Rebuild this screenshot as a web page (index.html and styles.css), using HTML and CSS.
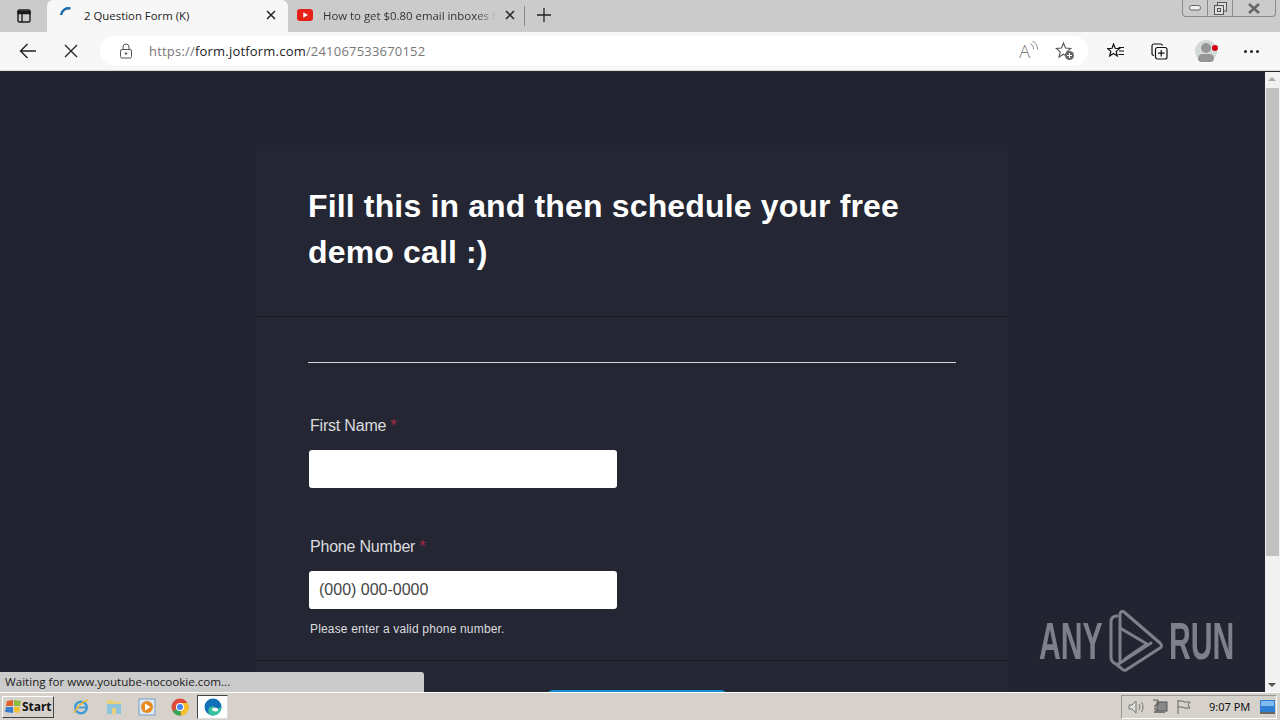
FILE: index.html
```html
<!DOCTYPE html>
<html lang="en">
<head>
    <meta charset="UTF-8">
    <meta name="viewport" content="width=device-width, initial-scale=1.0">
    <title>2 Question Form (K)</title>
    <link rel="stylesheet" href="styles.css">
</head>
<body>
    <!-- Browser tabs -->
    <div class="tabstrip">
        <div class="tab-menu">
            <svg width="16" height="16" viewBox="0 0 16 16" fill="none" stroke="#1a1a1a" stroke-width="1.4"><rect x="2" y="2" width="12" height="12" rx="1.5"/><path d="M2 3.5h12v2H2z" fill="#1a1a1a"/><path d="M6 5v9"/></svg>
        </div>
        <div class="tab tab-active">
            <svg class="tab-spin" width="14" height="14" viewBox="0 0 14 14" fill="none" stroke="#1b6aa8" stroke-width="2.4"><path d="M2 10C3 5 7 2.500 11.500 3.500"/></svg>
            <span class="tab-title">2 Question Form (K)</span>
            <svg class="tab-close" width="10" height="10" viewBox="0 0 10 10" stroke="#222" stroke-width="1.500"><path d="M1 1l8 8M9 1l-8 8"/></svg>
        </div>
        <div class="tab tab-second">
            <svg width="16" height="12" viewBox="0 0 16 12"><rect width="16" height="12" rx="3" fill="#e62117"/><path d="M6.300 3.300v5.400L11 6z" fill="#fff"/></svg>
            <span class="tab-title tab-title-fade">How to get $0.80 email inboxes f</span>
            <svg class="tab-close" width="10" height="10" viewBox="0 0 10 10" stroke="#222" stroke-width="1.500"><path d="M1 1l8 8M9 1l-8 8"/></svg>
        </div>
        <div class="tab-sep"></div>
        <svg class="tab-new" width="14" height="14" viewBox="0 0 14 14" stroke="#222" stroke-width="1.300"><path d="M7 0v14M0 7h14"/></svg>
        <div class="window-btns">
            <div class="win-btn win-min"><svg width="12" height="6" viewBox="0 0 12 6" fill="#eee" stroke="#666"><rect x="0.500" y="0.500" width="11" height="4.500" rx="2"/></svg></div>
            <div class="win-btn win-max"><svg width="13" height="13" viewBox="0 0 13 13" fill="none" stroke="#555"><rect x="3.500" y="0.500" width="9" height="8.500" fill="#ddd"/><rect x="0.500" y="3.500" width="9" height="9" fill="#ddd"/><rect x="3.500" y="6.500" width="3" height="3"/></svg></div>
            <div class="win-btn win-close"><svg width="14" height="11" viewBox="0 0 14 11" fill="none" stroke="#666" stroke-width="2.500"><path d="M2 1l10 9M12 1L2 10"/></svg></div>
        </div>
    </div>

    <!-- Address bar -->
    <div class="toolbar">
        <svg class="tool-back" width="18" height="16" viewBox="0 0 18 16" fill="none" stroke="#222" stroke-width="1.400"><path d="M17 8H1.500M8.500 1L1.500 8l7 7"/></svg>
        <svg class="tool-stop" width="14" height="14" viewBox="0 0 14 14" stroke="#222" stroke-width="1.300"><path d="M1 1l12 12M13 1L1 13"/></svg>
        <div class="address">
            <svg class="lock" width="14" height="16" viewBox="0 0 14 16" fill="none" stroke="#555"><rect x="1.500" y="6.500" width="11" height="8.500" rx="1.500"/><path d="M4 6.500V4a3 3 0 0 1 6 0v2.500"/><circle cx="7" cy="10.500" r="0.800" fill="#555"/></svg>
            <span class="url"><span class="url-dim">https://</span>form.jotform.com<span class="url-dim">/241067533670152</span></span>
            <span class="read-aloud">A<svg width="8" height="12" viewBox="0 0 8 12" fill="none" stroke="#888"><path d="M0.500 3c2 .5 3 2.500 3 5M2.500 0.500c3 .5 5 4 5 8"/></svg></span>
            <svg class="fav-add" width="20" height="20" viewBox="0 0 20 20"><path d="M8.500 2l2 5 5.300.4-4 3.500 1.200 5.100-4.500-2.800L4 16l1.300-5.100-4-3.500L6.500 7z" fill="none" stroke="#555" stroke-width="1.100"/><circle cx="14.500" cy="14.500" r="4.500" fill="#666"/><path d="M14.500 12v5M12 14.500h5" stroke="#fff"/></svg>
        </div>
        <div class="tool-right">
            <svg width="18" height="16" viewBox="0 0 18 16" fill="none" stroke="#111" stroke-width="1.200"><path d="M6.500 1l1.700 4.300 4.300.3-3.300 2.800 1.100 4.600-3.800-2.500-3.800 2.500 1.100-4.600L0.800 5.600l4.300-.3z"/><path d="M11.500 4.500H17M12 8h5M11.500 11.500H17"/></svg>
            <svg width="17" height="17" viewBox="0 0 17 17" fill="none" stroke="#111" stroke-width="1.200"><path d="M3 12.500c-1.200 0-2-.8-2-2V3c0-1.200.8-2 2-2h6.500c1 0 1.800.6 2 1.500"/><rect x="4.500" y="4.500" width="11.500" height="11.500" rx="2"/><path d="M10.200 7v6.500M7 10.200h6.500"/></svg>
            <div class="avatar"><span class="avatar-head"></span><span class="avatar-body"></span><span class="avatar-dot"></span></div>
            <div class="dots"><span></span><span></span><span></span></div>
        </div>
    </div>

    <!-- Page -->
    <div class="viewport">
        <div class="page">
            <div class="form-card">
                <div class="form-header">
                    <h1>Fill this in and then schedule your free demo call :)</h1>
                </div>
                <div class="form-body">
                    <div class="rule"></div>
                    <div class="form-group">
                        <label>First Name <span class="req">*</span></label>
                        <input type="text" class="field">
                    </div>
                    <div class="form-group form-group-phone">
                        <label>Phone Number <span class="req">*</span></label>
                        <input type="text" class="field" placeholder="(000) 000-0000">
                        <div class="hint">Please enter a valid phone number.</div>
                    </div>
                </div>
                <div class="form-footer">
                    <div class="submit"></div>
                </div>
            </div>
        </div>
        <div class="scrollbar">
            <div class="arrow arrow-up"></div>
            <div class="thumb"></div>
            <div class="arrow arrow-down"></div>
        </div>
        <div class="status">Waiting for www.youtube-nocookie.com...</div>
        <div class="watermark">
            <span class="wm-text">ANY</span>
            <svg width="56" height="62" viewBox="0 0 56 62" fill="none" stroke="#7f818a" stroke-width="3" stroke-linejoin="round" stroke-linecap="round"><path d="M9 6Q3 6 3 12V47Q3 52 8 54"/><path d="M12 52V4Q13 0 16 2L52 33Q55 36 52 38L18 60Q15 61 13 58L9 55L43 33"/><path d="M12 18L39 34L17 49"/></svg>
            <span class="wm-text">RUN</span>
        </div>
    </div>

    <!-- Windows taskbar -->
    <div class="taskbar">
        <div class="start">
            <svg width="16" height="15" viewBox="0 0 16 15"><path d="M2 2l6-1v6H1z" fill="#e2622b"/><path d="M9 1l7 1-1 5H9z" fill="#8dbb3c"/><path d="M1 8h7v6l-8-1z" fill="#3a7fd0"/><path d="M9 8h6l-1 6-5-1z" fill="#f3c32f"/></svg>
            <span>Start</span>
        </div>
        <div class="quick">
            <svg width="18" height="18" viewBox="0 0 18 18" fill="none"><circle cx="9" cy="9.500" r="5.800" stroke="#3f9bd8" stroke-width="2.400"/><path d="M5 9.500h9" stroke="#3f9bd8" stroke-width="1.800"/><path d="M2 15C5 9 11 3 16 2" stroke="#e8b93a" stroke-width="1.500"/></svg>
            <svg width="18" height="17" viewBox="0 0 18 17"><path d="M2 2h6l1 2h7v12H2z" fill="#e9cf78"/><rect x="2" y="6" width="14" height="10" fill="#8fc4de"/><rect x="7" y="10" width="4" height="6" fill="#e9cf78"/></svg>
            <svg width="18" height="18" viewBox="0 0 18 18"><rect x="1" y="1" width="16" height="16" fill="#dbe8f5" stroke="#7d9cc2"/><circle cx="9" cy="9" r="6" fill="#e98a1e"/><path d="M7 5.500v7l5.500-3.500z" fill="#fff"/></svg>
            <svg width="18" height="18" viewBox="0 0 18 18"><circle cx="9" cy="9" r="8.500" fill="#dd4b3a"/><path d="M9 9L1.700 13.300A8.500 8.500 0 0 0 10 17.500z" fill="#3aa757"/><path d="M9 5h7.800a8.500 8.500 0 0 1-6.800 12.500z" fill="#f6c02c"/><circle cx="9" cy="9" r="4" fill="#fff"/><circle cx="9" cy="9" r="3" fill="#4285f4"/></svg>
            <div class="quick-active">
                <svg width="18" height="18" viewBox="0 0 18 18"><circle cx="9" cy="9" r="8.500" fill="#1270b8"/><path d="M17.500 9.500c-.5 4.500-4 8-8.500 8-1 0-2-.2-3-.6C4 15 3.500 11 6 9c2-1.500 5-.5 5 1.500 1 .5 3 .5 4-.5 1-.8 1.800-1 2.500-.5z" fill="#35c1a0"/><path d="M8 11c1.500-2 5-1.500 6 0 1 1.500-.5 2.500-2.500 2.500S7.500 12.500 8 11z" fill="#fff"/></svg>
            </div>
        </div>
        <div class="tray">
            <svg width="16" height="14" viewBox="0 0 16 14" fill="none" stroke="#777"><path d="M1 5h3l4-4v12L4 9H1z" fill="#ddd"/><path d="M11 4c1 1.500 1 4.500 0 6M13.500 2c2 2.500 2 7.500 0 10"/></svg>
            <svg width="16" height="15" viewBox="0 0 16 15"><rect x="5" y="3" width="10" height="9" fill="#888" stroke="#555"/><path d="M1 1h5v5H3v5h3" fill="none" stroke="#555"/><rect x="2" y="12" width="11" height="2" fill="#777"/></svg>
            <svg width="15" height="15" viewBox="0 0 15 15" fill="none" stroke="#666"><path d="M2 1v14M2 2h5l1 1h6l-2 3 2 3H8L7 8H2"/></svg>
            <span class="clock">9:07 PM</span>
            <svg class="show-desktop" width="15" height="14" viewBox="0 0 15 14"><rect width="15" height="12" fill="#2f7fd1"/><rect x="1" y="1" width="13" height="5" fill="#7fbdf0"/><rect y="12" width="15" height="2" fill="#666"/></svg>
        </div>
    </div>
</body>
</html>
```

FILE: styles.css
```css
* {
    box-sizing: border-box;
}
html, body {
    height: 100%;
}
body {
    margin: 0;
    display: flex;
    flex-direction: column;
    overflow: hidden;
    font-family: "Open Sans", "Noto Sans", sans-serif;
    background-color: #222531;
}
svg {
    display: block;
    flex-shrink: 0;
}

/* tab strip */
.tabstrip {
    height: 32px;
    flex-shrink: 0;
    display: flex;
    align-items: flex-end;
    background-color: #cbcbcb;
    position: relative;
}
.tab-menu {
    width: 47px;
    height: 32px;
    padding-left: 16px;
    display: flex;
    align-items: center;
}
.tab {
    height: 32px;
    padding: 0 9px 2px 9px;
    display: flex;
    align-items: center;
    font-size: 11.4px;
    color: #333;
}
.tab-second {
    width: 236px;
}
.tab-active {
    width: 241px;
    padding: 0 12px 2px 12px;
    background-color: #f7f7f7;
    border-radius: 6px 6px 0 0;
    color: #222;
}
.tab-spin {
    margin-bottom: 6px;
}
.tab-title {
    flex: 1;
    margin-left: 11px;
    white-space: nowrap;
}
.tab-title-fade {
    margin-left: 10px;
    margin-right: 8px;
    -webkit-mask-image: linear-gradient(to right, #000 88%, transparent);
    mask-image: linear-gradient(to right, #000 88%, transparent);
}
.tab-sep {
    width: 1px;
    height: 20px;
    margin: 0 0 6px 0;
    background-color: #888;
}
.tab-new {
    margin: 0 0 10px 12px;
}
.window-btns {
    position: absolute;
    top: 0;
    right: 4px;
    display: flex;
    height: 17px;
    border: 1px solid #8a8a8a;
    border-top: none;
    border-radius: 0 0 4px 4px;
}
.win-btn {
    display: flex;
    align-items: center;
    justify-content: center;
    border-right: 1px solid #8a8a8a;
}
.win-min {
    width: 25px;
}
.win-max {
    width: 25px;
}
.win-close {
    width: 42px;
    border-right: none;
}

/* address bar */
.toolbar {
    height: 39px;
    flex-shrink: 0;
    display: flex;
    align-items: center;
    background-color: #f7f7f7;
    border-bottom: 1px solid #dcdcdc;
}
.tool-back {
    margin-left: 19px;
}
.tool-stop {
    margin-left: 27px;
}
.address {
    width: 988px;
    height: 30px;
    margin-left: 22px;
    padding: 0 13px 0 19px;
    display: flex;
    align-items: center;
    background-color: #fff;
    border-radius: 15px;
}
.url {
    flex: 1;
    margin-left: 16px;
    font-size: 13px;
    letter-spacing: 0.2px;
    color: #222;
}
.url-dim {
    color: #777;
}
.read-aloud {
    display: flex;
    align-items: flex-start;
    font-size: 18px;
    line-height: 20px;
    font-weight: 300;
    color: #777;
}
.fav-add {
    margin-left: 17px;
}
.tool-right {
    display: flex;
    align-items: center;
    margin-left: 19px;
}
.tool-right > svg + svg {
    margin-left: 26px;
}
.avatar {
    width: 22px;
    height: 22px;
    margin-left: 27px;
    border-radius: 50%;
    background-color: #d3d9d7;
    position: relative;
}
.avatar-head {
    position: absolute;
    left: 6px;
    top: 3px;
    width: 10px;
    height: 10px;
    border-radius: 50%;
    background-color: #969696;
}
.avatar-body {
    position: absolute;
    left: 3px;
    top: 14px;
    width: 16px;
    height: 8px;
    border-radius: 8px 8px 6px 6px;
    background-color: #969696;
}
.avatar-dot {
    position: absolute;
    left: 17px;
    top: 5px;
    width: 6px;
    height: 6px;
    border-radius: 50%;
    background-color: #d3001c;
}
.dots {
    display: flex;
    gap: 3px;
    margin-left: 27px;
}
.dots span {
    width: 3px;
    height: 3px;
    border-radius: 50%;
    background-color: #222;
}

/* page */
.viewport {
    flex: 1;
    min-height: 0;
    display: flex;
    position: relative;
    border-top: 1px solid #2a2a2a;
}
.page {
    flex: 1;
    overflow: hidden;
    padding-top: 79px;
    background-color: #222531;
}
.form-card {
    width: 752px;
    margin-left: 256px;
    background-color: #242733;
    font-family: "Liberation Sans", Arial, sans-serif;
    color: #fff;
}
.form-header {
    height: 166px;
    padding: 32px 52px 0;
    border-bottom: 1px solid #171922;
}
h1 {
    margin: 0;
    font-size: 32px;
    line-height: 46px;
    font-weight: bold;
    letter-spacing: 0.15px;
}
.form-body {
    height: 344px;
    padding: 45px 52px 0;
    border-bottom: 1px solid #171922;
}
.rule {
    height: 1px;
    background-color: #d8d8da;
}
.form-group {
    padding: 52px 2px 0;
}
.form-group-phone {
    padding-top: 48px;
}
label {
    display: block;
    height: 22px;
    margin-bottom: 13px;
    font-size: 16px;
    line-height: 22px;
    letter-spacing: -0.2px;
    color: #dcdcdf;
}
.req {
    color: #a82a40;
}
.field {
    display: block;
    width: 308px;
    height: 38px;
    margin-left: -1px;
    padding: 0 10px;
    border: none;
    border-radius: 3px;
    background-color: #fff;
    font-family: "Liberation Sans", Arial, sans-serif;
    font-size: 16px;
}
.field::placeholder {
    color: #444;
    opacity: 1;
}
.hint {
    margin-top: 13px;
    font-size: 12px;
    line-height: 15px;
    letter-spacing: 0.17px;
    color: #dcdcdf;
}
.form-footer {
    padding: 29px 0 0 291px;
}
.submit {
    width: 180px;
    height: 40px;
    border-radius: 6px;
    background-color: #1a8fd6;
}

/* scrollbar */
.scrollbar {
    width: 15px;
    display: flex;
    flex-direction: column;
    background-color: #f1f1f1;
}
.thumb {
    height: 468px;
    margin: 2px 1px 0;
    background-color: #c2c2c2;
}
.arrow {
    width: 15px;
    height: 14px;
    position: relative;
}
.arrow-down {
    margin-top: auto;
}
.arrow::after {
    content: "";
    position: absolute;
    left: 3px;
    top: 5px;
    border-left: 4px solid transparent;
    border-right: 4px solid transparent;
}
.arrow-up::after {
    border-bottom: 4px solid #a8a8a8;
}
.arrow-down::after {
    border-top: 4px solid #555;
}

/* overlays */
.status {
    position: absolute;
    left: 0;
    bottom: 0;
    width: 424px;
    height: 20px;
    padding-left: 5px;
    background-color: #cbcbcb;
    border-radius: 0 3px 0 0;
    font-size: 11.6px;
    line-height: 20px;
    color: #222;
}
.watermark {
    position: absolute;
    left: 1039px;
    top: 538px;
    height: 62px;
    display: flex;
    align-items: center;
    color: #7f818a;
    font-family: "Liberation Sans", sans-serif;
    font-size: 52px;
    line-height: 62px;
}
.wm-text {
    width: 62px;
    margin-right: 7px;
    font-weight: bold;
    white-space: nowrap;
    transform: scaleX(0.58);
    transform-origin: left center;
}
.watermark svg {
    margin-right: 5px;
}

/* taskbar */
.taskbar {
    height: 28px;
    flex-shrink: 0;
    display: flex;
    align-items: center;
    background-color: #d6d2cb;
    border-top: 1px solid #fff;
    font-family: "Noto Sans", sans-serif;
    font-size: 11px;
    color: #111;
}
.start {
    width: 52px;
    height: 22px;
    margin-left: 2px;
    padding-left: 2px;
    display: flex;
    align-items: center;
    gap: 1px;
    border: 1px solid;
    border-color: #fff #444 #444 #fff;
    font-size: 12px;
    font-weight: bold;
}
.quick {
    display: flex;
    align-items: center;
    gap: 15px;
    margin-left: 18px;
}
.quick-active {
    width: 31px;
    height: 24px;
    margin-left: -7px;
    display: flex;
    align-items: center;
    justify-content: center;
    background-color: #fff;
    border: 1px solid;
    border-color: #444 #ddd #ddd #444;
}
.tray {
    height: 24px;
    margin-left: auto;
    margin-right: 3px;
    width: 156px;
    padding-left: 6px;
    display: flex;
    align-items: center;
    gap: 8px;
    border: 1px solid;
    border-color: #999 #fff #fff #999;
}
.clock {
    margin-left: 10px;
    font-size: 11px;
    white-space: nowrap;
}
.show-desktop {
    margin-left: auto;
    margin-right: 1px;
}
```
